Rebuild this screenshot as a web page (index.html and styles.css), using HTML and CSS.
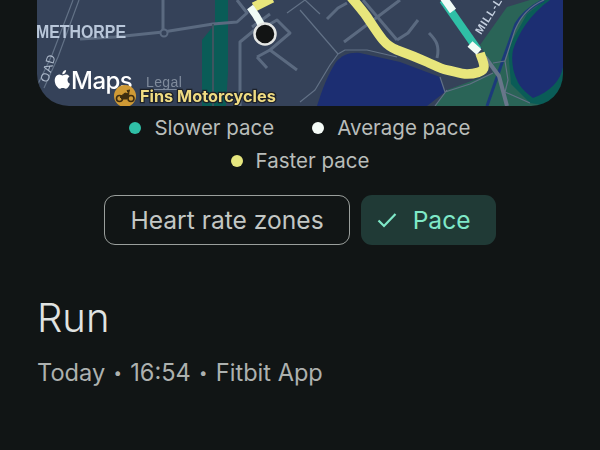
FILE: index.html
```html
<!DOCTYPE html>
<html lang="en">
<head>
<meta charset="utf-8">
<title>Run</title>
<link rel="stylesheet" href="styles.css">
</head>
<body>
<main class="page">
  <div class="map">
    <svg class="map-svg" viewBox="37 0 526 106" width="526" height="106">
      <rect x="37" y="0" width="526" height="106" class="land"/>
      <path class="park-dark" d="M215 0H228V72L226 106H202V40L215 24Z"/>
      <path class="green" d="M480 45L507 7L530 0H563V106H435L447 90L493 73L487 58Z"/>
      <path class="park-dark" d="M508 48L527 14L545 0H563V106H548L530 103L511 84Z"/>
      <path class="water" d="M513 50C518 34 530 14 550 0H563V67C561 80 550 92 533 98C525 92 519 86 517 80C513 72 511 60 513 50Z"/>
      <path class="water" d="M317 106C322 90 328 74 336 62C342 55 350 52 360 53L400 62L440 77L445 92L427 106Z"/>
      <path class="river" d="M487 106L503 60L516 24C522 14 532 6 544 0"/>
      <path class="road" d="M80 39L115 37L163 32L213 24L237 22L247 13L237 0"/>
      <path class="road" d="M163 0V32"/>
      <path class="road-dark" d="M213 24V106"/>
      <path class="road-thin" d="M73 0L52 55L38 84"/>
      <path class="road-thin" d="M79 0L58 57L44 88"/>
      <circle class="roundabout" cx="164" cy="33" r="3.500"/>
      <path class="road" d="M257 28L240 42V106"/>
      <path class="road" d="M270 24L277 20L290 33L270 50L297 70"/>
      <path class="road" d="M257 57L267 68M270 50L257 57M270 14L252 27"/>
      <path class="road-thin" d="M287 13L305 0L320 14"/>
      <path class="road" d="M363 0L397 40"/>
      <path class="road" d="M327 19L338 8L347 3M344 42L400 0M397 40L408 33L418 20"/>
      <path class="road" d="M429 33C436 40 440 46 437 58"/>
      <path class="road-thin" d="M300 10L338 54L345 50L367 50L397 57M300 102L315 90L330 65L338 54M440 77L445 92L470 84L493 73M435 106L447 90M493 63L505 61L508 80L505 92L530 103M505 61L515 30C520 18 530 6 544 0"/>
      <path class="road-major" d="M485 57L499 76L507 106"/>
      <text class="road-label" transform="translate(481 35) rotate(-58)">MILL-L</text>
      <text class="place-label" x="36" y="38" textLength="90" lengthAdjust="spacingAndGlyphs">METHORPE</text>
      <text class="road-label-small" transform="translate(48 83) rotate(-74)">OAD</text>

      <path class="route-yellow" d="M350 -4C356 3 363 11 367 17C373 26 378 34 383 40C388 46 392 48 397 50C408 54 418 58 427 62C434 65 440 69 447 70C454 71 460 74 467 74C474 74 484 72 484 67C484 62 481 57 480 53"/>
      <path class="route-teal" d="M443 0L478 50"/>
      <path class="route-white" d="M443 -3L453 11M470 44L479 52"/>
      <path class="route-yellow" d="M272 -2L254 7"/>
      <path class="route-white" d="M250 7C254 12 258 18 262 26"/>
      <circle class="marker" cx="265" cy="34" r="10.500"/>

      <path class="apple" transform="translate(53 70) scale(.78)" d="M12.152 6.896c-.948 0-2.415-1.078-3.96-1.04-2.04.027-3.91 1.183-4.961 3.014-2.117 3.675-.546 9.103 1.519 12.09 1.013 1.454 2.208 3.09 3.792 3.039 1.52-.065 2.09-.987 3.935-.987 1.831 0 2.35.987 3.96.948 1.637-.026 2.676-1.48 3.676-2.948 1.156-1.688 1.636-3.325 1.662-3.415-.039-.013-3.182-1.221-3.22-4.857-.026-3.04 2.48-4.494 2.597-4.559-1.429-2.09-3.623-2.324-4.39-2.376-2-.156-3.675 1.09-4.61 1.09zM15.53 3.83c.843-1.012 1.4-2.427 1.245-3.83-1.207.052-2.662.805-3.532 1.818-.78.896-1.454 2.338-1.273 3.714 1.338.104 2.715-.688 3.559-1.701"/>
      <text class="maps-word" x="71" y="89">Maps</text>
      <text class="legal" x="146" y="87">Legal</text>
      <path class="legal-line" d="M146 89.500H183"/>
      <circle class="poi-dot" cx="125" cy="96" r="11"/>
      <g class="bike">
        <circle cx="119.500" cy="98.500" r="3"/>
        <circle cx="131" cy="98.500" r="3"/>
        <path d="M120 97L125 93L129 94L127 99H122ZM129 94L127 90.500L130 90"/>
      </g>
      <text class="poi-label" x="140" y="102">Fins Motorcycles</text>
    </svg>
  </div>

  <ul class="legend">
    <li class="legend-item"><span class="dot dot-slow"></span>Slower pace</li>
    <li class="legend-item"><span class="dot dot-avg"></span>Average pace</li>
    <li class="legend-item"><span class="dot dot-fast"></span>Faster pace</li>
  </ul>

  <div class="chips">
    <button class="chip">Heart rate zones</button>
    <button class="chip chip-on">
      <svg class="check" viewBox="0 0 20 16" width="20" height="16"><path d="M1.500 8.500L7 14L18.500 2"/></svg>
      Pace
    </button>
  </div>

  <h1 class="title">Run</h1>
  <p class="meta">Today<span class="sep">•</span>16:54<span class="sep">•</span>Fitbit App</p>
</main>
</body>
</html>
```

FILE: styles.css
```css
* { box-sizing: border-box; }
html, body { margin: 0; padding: 0; height: 100%; overflow: hidden; }
body { background: #111515; font-family: Inter, "Noto Sans", sans-serif; color: #b9bdbb; }
.page { width: 600px; height: 450px; padding: 0 37px; }

.map { height: 106px; border-radius: 0 0 32px 32px; overflow: hidden; }
.map-svg { display: block; filter: blur(.35px); }
.land { fill: #354259; }
.park-dark { fill: #0a5c57; }
.green { fill: #2a6457; }
.water { fill: #1c2e72; }
.river { fill: none; stroke: #1c3a7a; stroke-width: 3; }
.road, .road-dark, .road-thin, .road-major { fill: none; stroke-linejoin: round; stroke-linecap: butt; }
.road { stroke: #5b6a80; stroke-width: 3; }
.road-dark { stroke: #3d5560; stroke-width: 2; }
.road-thin { stroke: #627186; stroke-width: 1.200; }
.road-major { stroke: #68768a; stroke-width: 4; }
.roundabout { fill: #354259; stroke: #5b6a80; stroke-width: 2; }
.place-label { font: 700 19px "Liberation Sans", sans-serif; fill: #b9c7da; }
.road-label { font: 700 11px "Liberation Sans", sans-serif; letter-spacing: .8px; fill: #c4cfdf; }
.road-label-small { font: 400 12px "Liberation Sans", sans-serif; letter-spacing: 1px; fill: #aebacb; }
.route-yellow, .route-teal, .route-white { fill: none; stroke-linejoin: round; }
.route-yellow { stroke: #e8e67c; stroke-width: 9.500; }
.route-teal { stroke: #2fbfa6; stroke-width: 8; }
.route-white { stroke: #f0fbf6; stroke-width: 7.500; }
.marker { fill: #121414; stroke: #e4e6e4; stroke-width: 2.500; }
.apple { fill: #fff; }
.maps-word { font: 500 24px Inter, sans-serif; letter-spacing: -.5px; fill: #fff; }
.legal { font: 400 14px "Liberation Sans", sans-serif; letter-spacing: .4px; fill: #7f8b9c; }
.legal-line { stroke: #7f8b9c; stroke-width: 1; }
.poi-dot { fill: #d09a35; }
.bike circle { fill: none; stroke: #3e2d10; stroke-width: 1.600; }
.bike path { fill: #3e2d10; stroke: #3e2d10; stroke-width: 1; }
.poi-label { font: 700 16.300px Inter, sans-serif; fill: #f0dc82; stroke: #1d2128; stroke-width: 2.500; paint-order: stroke; }

.legend { list-style: none; margin: 5px 0 0; padding: 0 60px; display: flex; flex-wrap: wrap; justify-content: center; column-gap: 38px; }
.legend-item { display: flex; align-items: center; gap: 13px; height: 33px; font-size: 20.500px; color: #b9bdba; }
.dot { width: 12px; height: 12px; border-radius: 50%; }
.dot-slow { background: #2fbfa6; }
.dot-avg { background: #f5fbf7; }
.dot-fast { background: #e6e67e; }

.chips { display: flex; justify-content: center; gap: 11px; margin-top: 18px; }
.chip { height: 50px; padding: 0 25px; border: 1.500px solid #9a9f9c; border-radius: 11px; background: transparent; font: 400 24.600px Inter, sans-serif; color: #c3c7c4; display: flex; align-items: center; }
.chip-on { border: 0; background: #203a36; color: #7fe8c8; gap: 16px; padding: 0 25px 0 16px; }
.check { fill: none; stroke: #7fe8c8; stroke-width: 2.200; }

.title { margin: 47px 0 0; font-size: 40px; line-height: 52px; font-weight: 300; color: #e0e3e1; }
.meta { margin: 13px 0 0; font-size: 23.600px; line-height: 32px; color: #adb1af; display: flex; align-items: center; }
.sep { font-size: 15px; width: 25px; text-align: center; }
```
